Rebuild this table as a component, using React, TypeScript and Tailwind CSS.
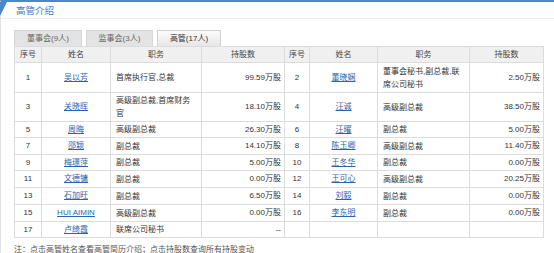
type Row = { no: number; name: string; job: string[]; shares: string };

const left: Row[] = [
  { no: 1, name: "吴以芳", job: ["首席执行官,总裁"], shares: "99.59万股" },
  { no: 3, name: "关晓晖", job: ["高级副总裁,首席财务", "官"], shares: "18.10万股" },
  { no: 5, name: "周晦", job: ["高级副总裁"], shares: "26.30万股" },
  { no: 7, name: "邵颖", job: ["副总裁"], shares: "14.10万股" },
  { no: 9, name: "梅璟萍", job: ["副总裁"], shares: "5.00万股" },
  { no: 11, name: "文德镛", job: ["副总裁"], shares: "0.00万股" },
  { no: 13, name: "石加旺", job: ["副总裁"], shares: "6.50万股" },
  { no: 15, name: "HUI AIMIN", job: ["高级副总裁"], shares: "0.00万股" },
  { no: 17, name: "卢绮霞", job: ["联席公司秘书"], shares: "--" },
];

const right: (Row | null)[] = [
  { no: 2, name: "董晓娴", job: ["董事会秘书,副总裁,联", "席公司秘书"], shares: "2.50万股" },
  { no: 4, name: "汪诚", job: ["高级副总裁"], shares: "38.50万股" },
  { no: 6, name: "汪曜", job: ["副总裁"], shares: "5.00万股" },
  { no: 8, name: "陈玉卿", job: ["高级副总裁"], shares: "11.40万股" },
  { no: 10, name: "王冬华", job: ["副总裁"], shares: "0.00万股" },
  { no: 12, name: "王可心", job: ["高级副总裁"], shares: "20.25万股" },
  { no: 14, name: "刘毅", job: ["副总裁"], shares: "0.00万股" },
  { no: 16, name: "李东明", job: ["副总裁"], shares: "0.00万股" },
  null,
];

const heights = ["h-[30px]", "h-[29px]", "h-[16px]", "h-[17px]", "h-[16px]", "h-[17px]", "h-[17px]", "h-[17px]", "h-[16px]"];

function Cells({ r, h }: { r: Row | null; h: string }) {
  const td = `border border-[#dcdcdc] ${h} p-0 align-middle`;
  if (!r)
    return (
      <>
        <td className={td}></td>
        <td className={td}></td>
        <td className={td}></td>
        <td className={td}></td>
      </>
    );
  return (
    <>
      <td className={`${td} text-center`}>{r.no}</td>
      <td className={`${td} text-center`}>
        <a className="text-[#2a64b0] underline">{r.name}</a>
      </td>
      <td className={`${td} pl-[5px] leading-[13px]`}>
        {r.job.map((j, i) => (
          <div key={i}>{j}</div>
        ))}
      </td>
      <td className={`${td} pr-[3px] text-right`}>{r.shares}</td>
    </>
  );
}

export default function App() {
  return (
    <div className="w-[554px] h-[253px] bg-white text-[#333] text-[8px] font-['Liberation_Sans','Noto_Sans_CJK_SC',sans-serif] overflow-hidden">
      <div className="border-t-2 border-[#4a88cc] border-l border-l-[#e2e2e2] h-[253px]">
        <div className="flex h-[17px] border-b border-[#eeeeee]">
          <svg width="7" height="14" viewBox="0 0 7 14" className="-ml-px shrink-0">
            <polygon points="0,0 7,0 0,14" fill="#4a88cc" />
          </svg>
          <span className="ml-[9px] mt-[1px] text-[9.5px] text-[#3b7cc6] leading-[16px]">高管介绍</span>
        </div>
        <div className="pl-[13px] pt-[11px]">
          <div className="flex gap-[4px] h-[16px]">
            <div className="w-[68px] bg-[#e3e3e3] border border-b-0 border-[#d6d6d6] text-center text-[#666] leading-[15px]">董事会(9人)</div>
            <div className="w-[67px] bg-[#e3e3e3] border border-b-0 border-[#d6d6d6] text-center text-[#666] leading-[15px]">监事会(3人)</div>
            <div className="w-[64px] bg-gradient-to-b from-[#fdfdfd] to-[#e6e6e6] border border-b-0 border-[#d0d0d0] text-center text-[#333] leading-[15px]">高管(17人)</div>
          </div>
          <table className="w-[529px] table-fixed border-collapse">
            <colgroup>
              <col className="w-[27px]" />
              <col className="w-[69px]" />
              <col className="w-[91px]" />
              <col className="w-[83px]" />
              <col className="w-[25px]" />
              <col className="w-[68px]" />
              <col className="w-[92px]" />
              <col className="w-[74px]" />
            </colgroup>
            <thead>
              <tr className="bg-[#f0f0f0] text-[#444]">
                {["序号", "姓名", "职务", "持股数", "序号", "姓名", "职务", "持股数"].map((t, i) => (
                  <th key={i} className="border border-[#dcdcdc] h-[16px] p-0 font-normal text-center">
                    {t}
                  </th>
                ))}
              </tr>
            </thead>
            <tbody>
              {left.map((r, i) => (
                <tr key={i}>
                  <Cells r={r} h={heights[i]} />
                  <Cells r={right[i]} h={heights[i]} />
                </tr>
              ))}
            </tbody>
          </table>
          <div className="mt-[6px] text-[#555] leading-[12px]">注：点击高管姓名查看高管简历介绍；点击持股数查询所有持股变动</div>
        </div>
      </div>
    </div>
  );
}
